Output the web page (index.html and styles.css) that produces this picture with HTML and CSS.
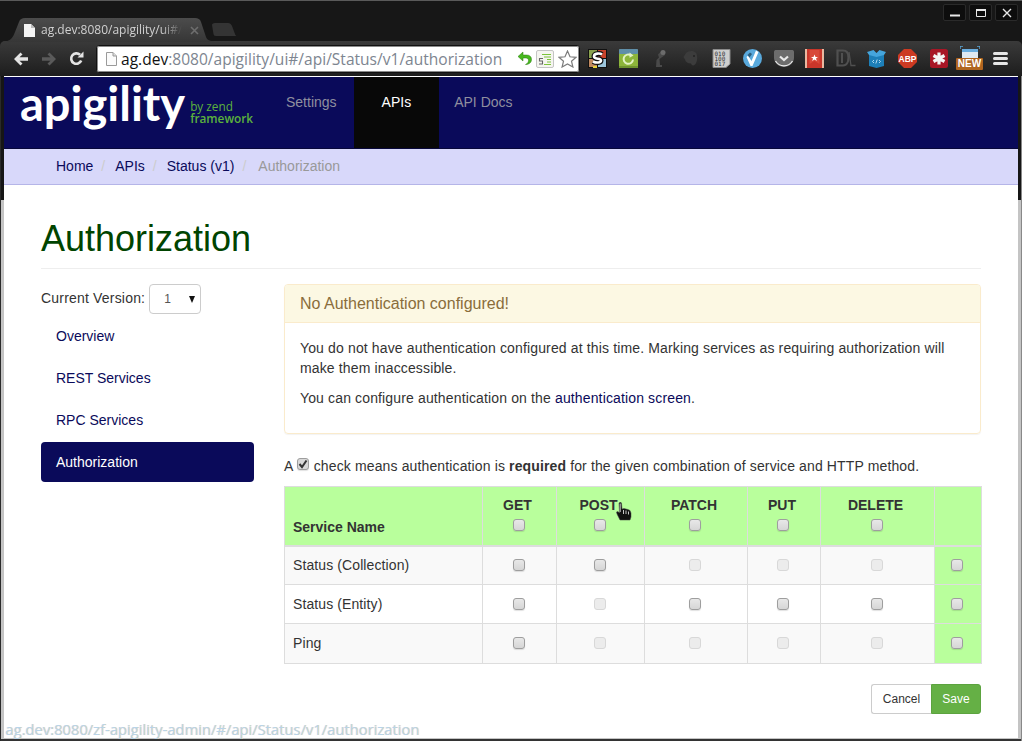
FILE: index.html
```html
<!DOCTYPE html>
<html lang="en">
<head>
<meta charset="utf-8">
<title>Authorization</title>
<link rel="stylesheet" href="styles.css">
</head>
<body>
<div class="window">
<div class="viewport">
  <header class="chrome">
    <div class="tabstrip">
      <svg class="tab-shape" width="240" height="25" viewBox="0 0 240 25"><defs><linearGradient id="tabg" x1="0" y1="0" x2="0" y2="1"><stop offset="0" stop-color="#4c4c4c"/><stop offset="1" stop-color="#363636"/></linearGradient></defs><path d="M4 25C10 24 13 21 15 15L19 5C20 2 22 1 25 1H195C198 1 200 2 201 5L206 20C207 23 210 24 215 25Z" fill="url(#tabg)"/><path d="M212 8C212 7 213 6 215 6H228C230 6 231 7 232 9L235 17C235.500 18.500 236 19 237 19H216C214 19 214 18 213.500 17Z" fill="#343434"/></svg>
      <div class="tab">
        <svg class="tab-page" width="11" height="13" viewBox="0 0 11 13"><path d="M0 0H7L11 4V13H0Z" fill="#f4f4f4"/><path d="M7 0V4H11" fill="#bbb"/></svg>
        <span class="tab-title">ag.dev:8080/apigility/ui#/</span>
        <svg class="tab-close" width="9" height="9" viewBox="0 0 9 9"><path d="M1 1L8 8M8 1L1 8" stroke="#6e6e6e" stroke-width="1.600"/></svg>
      </div>
      <div class="winbtns">
        <span class="winbtn"><svg width="12" height="10" viewBox="0 0 12 10"><path d="M1 7.500H11" stroke="#e8e8e8" stroke-width="2"/></svg></span>
        <span class="winbtn"><svg width="12" height="10" viewBox="0 0 12 10"><path d="M1.500 1.500H10.500V8.500H1.500Z" fill="none" stroke="#e8e8e8"/><path d="M1 2H11" stroke="#e8e8e8" stroke-width="2"/></svg></span>
        <span class="winbtn"><svg width="12" height="10" viewBox="0 0 12 10"><path d="M2 1L10 9M10 1L2 9" stroke="#e8e8e8" stroke-width="1.400"/></svg></span>
      </div>
    </div>
    <div class="toolbar">
      <div class="navbtns">
        <svg width="16" height="14" viewBox="0 0 16 14"><path d="M7.500 0.500L1 7L7.500 13.500L9.500 11.500L6.500 8.800H15V5.200H6.500L9.500 2.500Z" fill="#e4e4e4"/></svg>
        <svg width="16" height="14" viewBox="0 0 16 14"><path d="M8.500 0.500L15 7L8.500 13.500L6.500 11.500L9.500 8.800H1V5.200H9.500L6.500 2.500Z" fill="#5a5a5a"/></svg>
        <svg width="15" height="15" viewBox="0 0 15 15"><path d="M12.200 9.500A5.200 5.200 0 1 1 11 3.800" fill="none" stroke="#e4e4e4" stroke-width="2.600"/><path d="M8.500 6.500L14.500 6.500V0.500Z" fill="#e4e4e4"/></svg>
      </div>
      <div class="omnibox">
        <svg class="omni-page" width="11" height="14" viewBox="0 0 11 14"><path d="M.5 .5H7L10.500 4V13.500H.5Z" fill="#fbfbfb" stroke="#9a9a9a"/><path d="M7 .5V4H10.500" fill="#ddd" stroke="#9a9a9a"/></svg>
        <span class="url"><span class="url-host">ag.dev</span>:8080/apigility/ui#/api/Status/v1/authorization</span>
        <svg class="omni-icon" width="15" height="15" viewBox="0 0 15 15"><path d="M6 1L1 5.500L6 10V7H9C10.500 7 11.500 8 11.500 9.500C11.500 11 10.500 12.500 8.500 13.500C12 13.500 14.500 11.500 14.500 8.500C14.500 5.500 12.500 4 9.500 4H6Z" fill="#46b81e" stroke="#2d7a12" stroke-width=".5"/></svg>
        <svg class="omni-icon" width="18" height="18" viewBox="0 0 18 18"><rect x=".5" y=".5" width="17" height="17" rx="1.500" fill="#f5f5f0" stroke="#c4c4c4"/><path d="M6 4.500H15M8 7H15M11 9.500H15M11 12H15M8 14.500H15" stroke="#7cc43a" stroke-width="1.200"/><path d="M7 8.500H3.500V11H6.500V14H3" fill="none" stroke="#666" stroke-width="1.100"/></svg>
        <svg class="omni-icon" width="19" height="18" viewBox="0 0 19 18"><path d="M9.500 1L12 6.800L18 7.300L13.500 11.200L14.900 17L9.500 14L4.100 17L5.500 11.200L1 7.300L7 6.800Z" fill="#fff" stroke="#7c7c7c" stroke-width="1.200"/></svg>
      </div>
      <div class="extensions">
        <svg width="19" height="19" viewBox="0 0 19 19"><rect width="19" height="19" fill="#111"/><rect x="1" y="1" width="8" height="8" fill="#8aa24e"/><rect x="10" y="1" width="8" height="8" fill="#c8432c"/><rect x="1" y="10" width="8" height="8" fill="#c08a60"/><rect x="10" y="10" width="8" height="8" fill="#9cc6dc"/><path d="M14 5.500C12 4 6 4 6 7.500C6 11 13 8.500 13 11.500C13 14 8 14 5 12.500" fill="none" stroke="#111" stroke-width="5"/><path d="M14 5.500C12 4 6 4 6 7.500C6 11 13 8.500 13 11.500C13 14 8 14 5 12.500" fill="none" stroke="#fff" stroke-width="2.600"/><rect x="5" y="17" width="4" height="2" fill="#e8d33a"/></svg>
        <svg width="19" height="19" viewBox="0 0 19 19"><rect width="19" height="19" rx="2" fill="#8cb53a"/><rect width="19" height="5" rx="1" fill="#5f8ea8"/><path d="M0 18H19" stroke="#6f9430" stroke-width="2"/><path d="M14 10.500A4.700 4.700 0 1 1 12 6.300" fill="none" stroke="#e2f2c4" stroke-width="2"/><path d="M10.500 3.500L14.500 6.500L10.500 8.800Z" fill="#e2f2c4"/></svg>
        <svg width="14" height="19" viewBox="0 0 14 19"><path d="M3 18H9V16H7L6.500 10L12 6L9 1.500L5 5.500L6 8.500L3.500 11Z" fill="#4a4a4a"/><circle cx="10" cy="3.500" r="2.500" fill="#6c6c6c"/></svg>
        <svg width="15" height="17" viewBox="0 0 15 17"><path d="M3 3C5 .5 11 0 13 3C15 6 14.500 12 12 14.500C10 16.500 8.500 15 8 13.500C5 13.500 2.500 12 2 9.500L.5 7Z" fill="#3c3c3c"/><circle cx="11" cy="6" r="1" fill="#222"/></svg>
        <svg width="19" height="19" viewBox="0 0 19 19"><path d="M1 .5H18V15L14 18.500H1Z" fill="#cfcfcf" stroke="#8a8a8a"/><text class="bin" x="2.500" y="6.500">010</text><text class="bin" x="2.500" y="11.500">100</text><text class="bin" x="2.500" y="16.500">017</text></svg>
        <svg width="19" height="19" viewBox="0 0 19 19"><circle cx="9.500" cy="9.500" r="9.500" fill="#59a9dc"/><path d="M5 6.500L8.500 12L13 1.500L15.500 3L9.500 17H7.500L3.500 8Z" fill="#fff"/><path d="M6.500 8.500L9 5L7 3.500L4.500 6Z" fill="#2c5d7d"/></svg>
        <svg width="20" height="17" viewBox="0 0 20 17"><path d="M0 2C0 .5 1 0 2 0H18C19 0 20 .5 20 2V8C20 13 15 17 10 17C5 17 0 13 0 8Z" fill="#6c6c6c"/><path d="M1.500 11C4 15 7 15.800 10 15.800C13 15.800 16 15 18.500 11" fill="none" stroke="#eee" stroke-width="1.200"/><path d="M6 6.500L10 10L14 6.500" fill="none" stroke="#e8e8e8" stroke-width="2.200"/></svg>
        <svg width="19" height="19" viewBox="0 0 19 19"><rect width="19" height="19" rx="1" fill="#c8362a"/><path d="M1 0V19M18 0V19" stroke="#e9b8a0" stroke-width="2"/><path d="M4.500 1V15L9.500 12L14.500 15V1" fill="#d8493a"/><path d="M9.500 5.500L10.500 8H13L11 9.500L11.800 12L9.500 10.500L7.200 12L8 9.500L6 8H8.500Z" fill="#fff"/></svg>
        <svg width="20" height="19" viewBox="0 0 20 19"><path d="M1.500 1.500H7C11 1.500 12.500 5 12.500 8.500C12.500 12 11 16.500 7 16.500H1.500Z" fill="none" stroke="#505050" stroke-width="2.200"/><path d="M6 4V14" stroke="#505050" stroke-width="2"/><path d="M13 3L15 16.500H19.500" fill="none" stroke="#505050" stroke-width="1.300"/></svg>
        <svg width="19" height="19" viewBox="0 0 19 19"><path d="M2 6H17V17L9.500 19L2 17Z" fill="#1d7fb8"/><path d="M2 6L0 3L6.500 1L9.500 4L12.500 1L19 3L17 6L9.500 8Z" fill="#45a5dc"/><path d="M7 11L5.500 12.500L7 14M12 11L13.500 12.500L12 14M10.200 10.500L8.800 14.500" fill="none" stroke="#bfe3f7" stroke-width=".9"/></svg>
        <svg width="19" height="19" viewBox="0 0 19 19"><path d="M6 0H13L19 6V13L13 19H6L0 13V6Z" fill="#cc3a22"/><text class="abp-text" x="9.500" y="13" text-anchor="middle">ABP</text></svg>
        <svg width="18" height="19" viewBox="0 0 18 19"><rect width="18" height="19" rx="2.500" fill="#a81626"/><path d="M9 3.500V15.500M3.500 6.500L14.500 12.500M14.500 6.500L3.500 12.500" stroke="#f4f4f4" stroke-width="3.200"/></svg>
        <span class="newext">
          <svg width="20" height="16" viewBox="0 0 20 16"><path d="M0 3V0H3M17 0H20V3" fill="none" stroke="#5aa6d8" stroke-width="1.400"/><rect x="2" y="3" width="16" height="13" fill="#dfe9f2"/><rect x="2" y="3" width="16" height="3" fill="#6aaee0"/></svg>
          <span class="newbadge">NEW</span>
        </span>
        <svg width="15" height="15" viewBox="0 0 15 15"><path d="M1.500 2.500H13.500M1.500 7.500H13.500M1.500 12.500H13.500" stroke="#e6e6e6" stroke-width="3" stroke-linecap="round"/></svg>
      </div>
    </div>
  </header>

  <nav class="navbar">
    <div class="brand">
      <span class="logo">apigility</span>
      <span class="byline"><span class="by">by zend</span><span class="fw">framework</span></span>
    </div>
    <ul class="navlist">
      <li class="navitem navitem-settings">Settings</li>
      <li class="navitem navitem-active">APIs</li>
      <li class="navitem navitem-docs">API Docs</li>
    </ul>
  </nav>

  <ol class="crumbs">
    <li class="crumb"><a class="link">Home</a><span class="sep">/</span></li>
    <li class="crumb"><a class="link">APIs</a><span class="sep">/</span></li>
    <li class="crumb"><a class="link">Status (v1)</a><span class="sep">/</span></li>
    <li class="crumb crumb-active">Authorization</li>
  </ol>

  <main class="page">
    <h1 class="title">Authorization</h1>
    <div class="columns">
      <aside class="sidebar">
        <div class="version"><span class="version-label">Current Version:</span><span class="select"><span class="select-val">1</span><span class="select-arrow"></span></span></div>
        <ul class="pills">
          <li class="pill">Overview</li>
          <li class="pill">REST Services</li>
          <li class="pill">RPC Services</li>
          <li class="pill pill-active">Authorization</li>
        </ul>
      </aside>
      <section class="content">
        <div class="panel">
          <div class="panel-heading">No Authentication configured!</div>
          <div class="panel-body">
            <p class="para">You do not have authentication configured at this time. Marking services as requiring authorization will make them inaccessible.</p>
            <p class="para">You can configure authentication on the <a class="link">authentication screen</a>.</p>
          </div>
        </div>
        <p class="legend">A <span class="cb cb-checked"><svg width="10" height="10" viewBox="0 0 10 10"><path d="M1.500 5L4 8L8.500 1.500" fill="none" stroke="#333" stroke-width="2"/></svg></span> check means authentication is <strong>required</strong> for the given combination of service and HTTP method.</p>
        <table class="grid">
          <colgroup><col class="c0"><col class="c1"><col class="c2"><col class="c3"><col class="c4"><col class="c5"><col class="c6"></colgroup>
          <thead>
            <tr>
              <th class="th-name">Service Name</th>
              <th>GET<span class="cb cb-block"></span></th>
              <th>POST<span class="cb cb-block"></span></th>
              <th>PATCH<span class="cb cb-block"></span></th>
              <th>PUT<span class="cb cb-block"></span></th>
              <th>DELETE<span class="cb cb-block"></span></th>
              <th></th>
            </tr>
          </thead>
          <tbody>
            <tr class="odd">
              <td class="name">Status (Collection)</td>
              <td><span class="cb cb-block"></span></td>
              <td><span class="cb cb-block"></span></td>
              <td><span class="cb cb-block cb-off"></span></td>
              <td><span class="cb cb-block cb-off"></span></td>
              <td><span class="cb cb-block cb-off"></span></td>
              <td class="all"><span class="cb cb-block"></span></td>
            </tr>
            <tr>
              <td class="name">Status (Entity)</td>
              <td><span class="cb cb-block"></span></td>
              <td><span class="cb cb-block cb-off"></span></td>
              <td><span class="cb cb-block"></span></td>
              <td><span class="cb cb-block"></span></td>
              <td><span class="cb cb-block"></span></td>
              <td class="all"><span class="cb cb-block"></span></td>
            </tr>
            <tr class="odd row-last">
              <td class="name">Ping</td>
              <td><span class="cb cb-block"></span></td>
              <td><span class="cb cb-block cb-off"></span></td>
              <td><span class="cb cb-block cb-off"></span></td>
              <td><span class="cb cb-block cb-off"></span></td>
              <td><span class="cb cb-block cb-off"></span></td>
              <td class="all"><span class="cb cb-block"></span></td>
            </tr>
          </tbody>
        </table>
        <div class="actions"><span class="btn btn-cancel">Cancel</span><span class="btn btn-save">Save</span></div>
      </section>
    </div>
  </main>

  <svg class="cursor" width="16" height="19" viewBox="0 0 16 19"><path d="M3 1C4 0 5 0 5.500 1L6 7L8 6.500L10 7L12 7.500L14 8.500L15 11V15L14 18H4L1 12L0.500 10L2 9.500L3.500 11Z" fill="#111" stroke="#444" stroke-width=".5"/><path d="M4.200 1.500V10M7.500 8V12M10 8.500V12M12.500 9.500V12.500" stroke="#ddd" stroke-width=".9"/></svg>
  <div class="status">ag.dev:8080/zf-apigility-admin/#/api/Status/v1/authorization</div>
</div>
</div>
</body>
</html>
```
FILE: styles.css
```css
* { box-sizing: border-box; }
html, body { margin: 0; padding: 0; background: #fff; }
body { font-family: "Liberation Sans", Arial, sans-serif; font-size: 14px; line-height: 20px; color: #333; }
.window { width: 1022px; height: 741px; overflow: hidden; padding: 0 4px 3px; background: linear-gradient(#161616 0, #161616 200px, #c4c4c4 200px); box-shadow: inset 1px 0 #2a2a2a, inset -1px 0 #888, inset 0 -2px #333; }
.viewport { position: relative; height: 100%; background: #fff; display: flex; flex-direction: column; }

.chrome { margin: 0 -4px; background: #171717; border-top: 1px solid #5a5a5a; height: 76px; display: flex; flex-direction: column; flex: none; }
.tabstrip { position: relative; height: 40px; flex: none; }
.tab-shape { position: absolute; left: 0; top: 16px; }
.tab { position: absolute; left: 24px; top: 21px; display: flex; align-items: center; width: 175px; height: 16px; }
.tab-page { flex: none; }
.tab-title { margin-left: 6px; white-space: nowrap; font-family: "Open Sans", sans-serif; font-size: 12px; color: #d0d0d0; -webkit-mask-image: linear-gradient(90deg, #000 85%, transparent 100%); mask-image: linear-gradient(90deg, #000 85%, transparent 100%); }
.tab-close { margin-left: auto; }
.winbtns { position: absolute; right: 4px; top: 3px; display: flex; gap: 3px; }
.winbtn { width: 23px; height: 17px; display: flex; align-items: center; justify-content: center; background: #0d0d0d; border: 1px solid #2a2a2a; border-radius: 2px; }

.toolbar { height: 35px; flex: none; display: flex; align-items: center; background: linear-gradient(#3a3a3a, #1d1d1d); border-radius: 5px 5px 0 0; padding-left: 13px; }
.navbtns { display: flex; align-items: center; gap: 12px; width: 83px; }
.omnibox { width: 484px; height: 28px; background: #fff; border: 1px solid #111; outline: 1px solid #8a8a8a; outline-offset: -2px; border-radius: 3px; display: flex; align-items: center; padding: 0 2px 0 9px; flex: none; }
.omni-page { flex: none; margin-right: 4px; }
.url { width: 392px; flex: none; font-family: "Open Sans", sans-serif; font-size: 15.550px; color: #7d8590; white-space: nowrap; }
.url-host { color: #111; }
.omni-icon { flex: none; margin-left: 4px; }
.extensions { display: grid; grid-template-columns: repeat(14, 31px); justify-items: center; align-items: center; margin-left: 2px; flex: none; }
.abp-text { font-family: "Liberation Sans", sans-serif; font-size: 8.500px; font-weight: bold; fill: #fff; }
.bin { font-family: "DejaVu Sans Mono", monospace; font-size: 6px; fill: #333; }
.newext { position: relative; width: 27px; height: 25px; display: flex; justify-content: center; }
.newbadge { position: absolute; left: 0; top: 12px; width: 27px; height: 12px; background: #b0651f; border-radius: 1px; color: #fff; font-size: 10px; font-weight: bold; line-height: 12px; text-align: center; }

.navbar { flex: none; margin-top: 1px; height: 71px; background: #0a0a5a; display: flex; color: #8f8f9f; }
.brand { width: 265px; flex: none; display: flex; align-items: flex-start; padding: 3px 0 0 16px; }
.logo { font-family: "Lato", sans-serif; font-weight: 700; font-size: 47px; line-height: 46px; color: #fff; white-space: nowrap; }
.byline { display: flex; flex-direction: column; margin: 20px 0 0 5px; color: #5cb23c; font-family: "Open Sans", sans-serif; font-size: 11.800px; line-height: 12px; }
.fw { font-weight: 600; }
.navlist { list-style: none; margin: 0; padding: 0; display: flex; }
.navitem { padding: 15px 17px 0; }
.navitem-active { background: #080808; color: #fff; padding: 15px 28px 0; }
.navitem-docs { padding-left: 15px; }

.crumbs { flex: none; list-style: none; margin: 0; padding: 7px 0 0 52px; height: 37px; background: #d8d8fa; border-top: 1px solid #08083a; border-bottom: 1px solid #b5b5e8; display: flex; }
.crumb { white-space: nowrap; }
.sep { color: #ccc; padding: 0 10px 0 8px; }
.crumb-active { color: #999; margin-left: 2px; }
.link { color: #0a0a5a; text-decoration: none; }

.page { flex: 1; padding: 0 37px; }
.title { margin: 32px 0 15px; padding-bottom: 8px; border-bottom: 1px solid #eee; font-size: 36px; line-height: 43px; font-weight: 400; color: #004400; }
.columns { display: flex; gap: 30px; }
.sidebar { width: 213px; flex: none; }
.version { display: flex; align-items: center; gap: 4px; height: 30px; white-space: nowrap; }
.version-label { letter-spacing: .19px; margin-bottom: 2px; }
.select { width: 52px; height: 30px; border: 1px solid #ccc; border-radius: 4px; display: flex; align-items: center; justify-content: space-between; padding: 0 5px 0 14px; color: #555; font-size: 12px; }
.select-arrow { width: 0; height: 0; border-left: 3.500px solid transparent; border-right: 3.500px solid transparent; border-top: 7px solid #111; }
.pills { list-style: none; margin: 2px 0 0; padding: 0; display: flex; flex-direction: column; gap: 2px; }
.pill { height: 40px; line-height: 40px; padding-left: 15px; border-radius: 4px; color: #0a0a5a; }
.pill-active { background: #0a0a5a; color: #fff; }

.content { width: 697px; flex: none; }
.panel { border: 1px solid #faebcc; border-radius: 4px; height: 150px; box-shadow: 0 1px 1px rgba(0,0,0,.05); }
.panel-heading { height: 38px; background: #fcf8e3; border-bottom: 1px solid #faebcc; color: #8a6d3b; font-size: 16px; line-height: 37px; padding-left: 15px; border-radius: 3px 3px 0 0; }
.panel-body { padding: 15px; }
.para { margin: 0 0 10px; letter-spacing: .14px; }
.legend { margin: 22px 0 10px; white-space: nowrap; letter-spacing: .13px; }

.cb { display: inline-block; width: 12px; height: 12px; border: 1px solid #9e9e9e; border-radius: 3px; background: linear-gradient(#e8e8e8, #d6d6d6); box-shadow: 0 1px 1px rgba(0,0,0,.12); vertical-align: -1px; }
.cb-checked { background: #d8d8d8; margin: 0 1px 0 0; position: relative; top: -2px; }
.cb-checked svg { display: block; margin: 0; }
.cb-block { display: block; margin: 0 auto; }
.cb-off { border-color: #d8d8d8; background: #ececec; box-shadow: none; }

.grid { width: 697px; border-collapse: collapse; table-layout: fixed; }
.c0 { width: 198px; } .c1 { width: 74px; } .c2 { width: 88px; } .c3 { width: 103px; } .c4 { width: 73px; } .c5 { width: 114px; } .c6 { width: 47px; }
.grid th, .grid td { border: 1px solid #ddd; text-align: center; vertical-align: middle; }
.grid thead th { background: #b9ff9c; height: 59px; padding: 8px 11px 0 7px; vertical-align: top; border-bottom-width: 2px; }
.grid thead .cb-block { margin: 4px 0 0 calc(50% - 5px); }
.grid .th-name { text-align: left; vertical-align: bottom; padding: 0 8px 8px; }
.grid td { height: 39px; padding: 0 10px 0 8px; }
.grid .row-last td { height: 40px; padding-bottom: 2px; }
.grid .name { text-align: left; letter-spacing: .1px; }
.odd td { background: #f9f9f9; }
.grid .all, .odd .all { background: #b9ff9c; }

.actions { display: flex; justify-content: flex-end; margin-top: 20px; }
.btn { height: 30px; font-size: 12px; line-height: 28px; text-align: center; border: 1px solid #ccc; }
.btn-cancel { width: 60px; border-radius: 3px 0 0 3px; color: #333; border-right: 0; }
.btn-save { width: 50px; background: #65b045; border-color: #5ca33f; color: #fff; border-radius: 0 3px 3px 0; }

.cursor { position: absolute; left: 612px; top: 502px; }
.status { position: absolute; left: 1px; bottom: 0; height: 17px; font-family: "Open Sans", sans-serif; font-size: 14.750px; line-height: 17px; color: #b8d4ea; text-shadow: 1px 0 0 #ecd9bf; white-space: nowrap; }
```
